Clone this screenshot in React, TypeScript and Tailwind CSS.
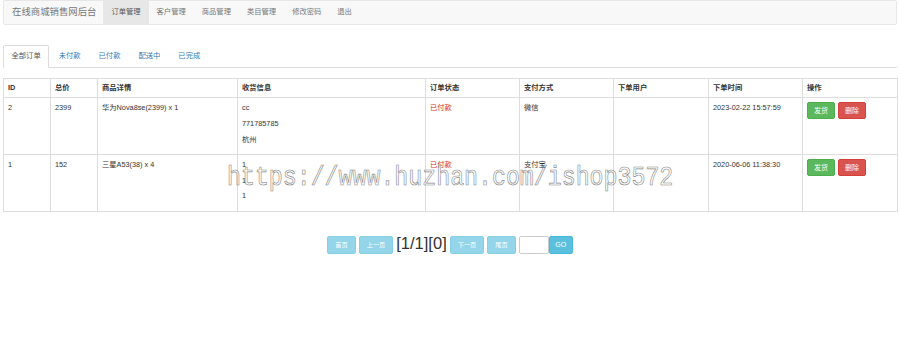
import React from "react";

const font = "font-['Liberation_Sans','Noto_Sans_CJK_SC',sans-serif]";

const navItems = ["订单管理", "客户管理", "商品管理", "类目管理", "修改密码", "退出"];
const tabs = ["全部订单", "未付款", "已付款", "配送中", "已完成"];
const headers = ["ID", "总价", "商品详情", "收货信息", "订单状态", "支付方式", "下单用户", "下单时间", "操作"];
const widths = [47, 47, 140, 188, 94, 94, 95, 94, 95];

const rows = [
  { id: "2", total: "2399", item: "华为Nova8se(2399) x 1", addr: ["cc", "771785785", "杭州"], status: "已付款", pay: "微信", user: "", time: "2023-02-22 15:57:59" },
  { id: "1", total: "152", item: "三星A53(38) x 4", addr: ["1", "1", "1"], status: "已付款", pay: "支付宝", user: "", time: "2020-06-06 11:38:30" },
];

function PageBtn({ label }: { label: string }) {
  return (
    <button className="h-[18px] px-[7px] rounded-[2px] border border-[#46b8da] bg-[#5bc0de] opacity-65 text-white text-[6.2px] leading-none">
      {label}
    </button>
  );
}

export default function App() {
  return (
    <div className={`${font} relative w-[900px] h-[352px] bg-white text-[#333] px-[3px] overflow-hidden`}>
      {/* Navbar */}
      <div className="flex items-stretch h-[25px] bg-[#f8f8f8] border border-[#e7e7e7] rounded-[2px]">
        <div className="flex items-center pl-[8px] pr-[7px] text-[9.4px] text-[#777]">在线商城销售网后台</div>
        {navItems.map((n, i) => (
          <div
            key={n}
            className={`flex items-center px-[8px] text-[7.3px] ${i === 0 ? "bg-[#e7e7e7] text-[#555]" : "text-[#777]"}`}
          >
            {n}
          </div>
        ))}
      </div>

      {/* Tabs */}
      <div className="mt-[20px] flex border-b border-[#ddd] h-[23px]">
        {tabs.map((t, i) => (
          <div
            key={t}
            className={`mr-[1px] -mb-px flex items-center px-[7.5px] text-[7.3px] rounded-t-[2px] border ${
              i === 0 ? "bg-white border-[#ddd] border-b-white text-[#555]" : "border-transparent text-[#337ab7]"
            }`}
          >
            {t}
          </div>
        ))}
      </div>

      {/* Table */}
      <table className="mt-[10px] w-[894px] table-fixed border-collapse border border-[#ddd] text-[7.3px] leading-[10.4px]">
        <colgroup>
          {widths.map((w, i) => (
            <col key={i} style={{ width: w }} />
          ))}
        </colgroup>
        <thead>
          <tr className="h-[19px]">
            {headers.map((h) => (
              <th key={h} className="border border-[#ddd] px-[4px] py-[4px] text-left font-bold align-middle">
                {h}
              </th>
            ))}
          </tr>
        </thead>
        <tbody>
          {rows.map((r) => (
            <tr key={r.id} className="h-[56px]">
              <td className="border border-[#ddd] px-[4px] pt-[5px] align-top">{r.id}</td>
              <td className="border border-[#ddd] px-[4px] pt-[5px] align-top">{r.total}</td>
              <td className="border border-[#ddd] px-[4px] pt-[5px] align-top">{r.item}</td>
              <td className="border border-[#ddd] px-[4px] pt-[5px] pb-[4px] align-top">
                {r.addr.map((a, i) => (
                  <p key={i} className="mb-[5.2px]">{a}</p>
                ))}
              </td>
              <td className="border border-[#ddd] px-[4px] pt-[5px] align-top text-[#d9302c]">{r.status}</td>
              <td className="border border-[#ddd] px-[4px] pt-[5px] align-top">{r.pay}</td>
              <td className="border border-[#ddd] px-[4px] pt-[5px] align-top">{r.user}</td>
              <td className="border border-[#ddd] px-[4px] pt-[5px] align-top">{r.time}</td>
              <td className="border border-[#ddd] px-[4px] pt-[4px] align-top">
                <div className="flex gap-[3px]">
                  <button className="w-[28px] h-[17px] rounded-[2px] bg-[#5cb85c] border border-[#4cae4c] text-white text-[7px] leading-none">发货</button>
                  <button className="w-[28px] h-[17px] rounded-[2px] bg-[#d9534f] border border-[#d43f3a] text-white text-[7px] leading-none">删除</button>
                </div>
              </td>
            </tr>
          ))}
        </tbody>
      </table>

      {/* Pagination */}
      <div className="mt-[24px] flex justify-center items-center gap-[3px]">
        <PageBtn label="首页" />
        <PageBtn label="上一页" />
        <span className="text-[16.5px] leading-none text-[#333] -mt-[3px]">[1/1][0]</span>
        <PageBtn label="下一页" />
        <PageBtn label="尾页" />
        <input className="w-[30px] h-[18px] border border-[#ccc] rounded-[2px] bg-white" />
        <button className="-ml-[3px] h-[18px] w-[24px] rounded-[2px] border border-[#46b8da] bg-[#5bc0de] text-white text-[7px] leading-none">GO</button>
      </div>

      {/* Watermark overlay */}
      <div className="absolute left-[227px] top-[164px] pointer-events-none origin-left scale-x-[0.83] opacity-[0.99] whitespace-nowrap font-['Liberation_Mono',monospace] text-[28px] leading-none text-[rgba(255,255,255,0.02)] [-webkit-text-stroke:0.7px_#8a8a8a]">
        https://www.huzhan.com/ishop3572
      </div>
    </div>
  );
}
